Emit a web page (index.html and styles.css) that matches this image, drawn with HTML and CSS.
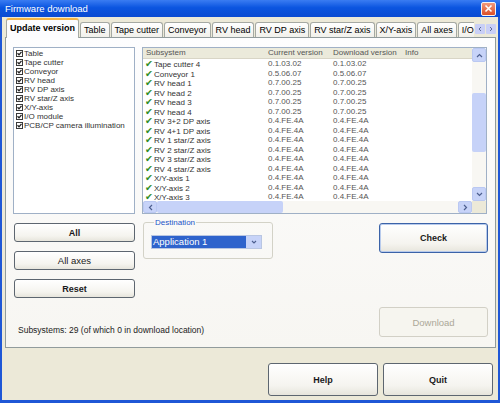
FILE: index.html
```html
<!DOCTYPE html>
<html lang="en">
<head>
    <meta charset="UTF-8">
    <title>Firmware download</title>
    <link rel="stylesheet" href="styles.css">
</head>
<body>
    <div class="window">
        <div class="titlebar">
            <span class="title">Firmware download</span>
            <span class="close">
                <svg width="9" height="9" viewBox="0 0 9 9"><path d="M1.5 1.5 L7.5 7.5 M7.5 1.5 L1.5 7.5" stroke="#fff" stroke-width="1.6"/></svg>
            </span>
        </div>

        <div class="frame">
            <div class="tabstrip">
                <div class="tab-list">
                    <div class="tab active">Update version</div>
                    <div class="tab">Table</div>
                    <div class="tab">Tape cutter</div>
                    <div class="tab">Conveyor</div>
                    <div class="tab">RV head</div>
                    <div class="tab">RV DP axis</div>
                    <div class="tab">RV star/Z axis</div>
                    <div class="tab">X/Y-axis</div>
                    <div class="tab">All axes</div>
                    <div class="tab">I/O module</div>
                </div>
                <div class="tab-arrows">
                    <span><svg width="6" height="6" viewBox="0 0 6 6"><path d="M4 1 L2 3 L4 5" stroke="#5a6a9a" fill="none"/></svg></span>
                    <span><svg width="6" height="6" viewBox="0 0 6 6"><path d="M2 1 L4 3 L2 5" stroke="#5a6a9a" fill="none"/></svg></span>
                </div>
            </div>

            <div class="tab-page">
                <div class="top-row">
                    <ul class="check-list">
                        <li><svg class="cb" viewBox="0 0 7 7"><rect x=".5" y=".5" width="6" height="6"/><path d="M1.5 3.3 L3 4.8 L5.5 1.8"/></svg>Table</li>
                        <li><svg class="cb" viewBox="0 0 7 7"><rect x=".5" y=".5" width="6" height="6"/><path d="M1.5 3.3 L3 4.8 L5.5 1.8"/></svg>Tape cutter</li>
                        <li><svg class="cb" viewBox="0 0 7 7"><rect x=".5" y=".5" width="6" height="6"/><path d="M1.5 3.3 L3 4.8 L5.5 1.8"/></svg>Conveyor</li>
                        <li><svg class="cb" viewBox="0 0 7 7"><rect x=".5" y=".5" width="6" height="6"/><path d="M1.5 3.3 L3 4.8 L5.5 1.8"/></svg>RV head</li>
                        <li><svg class="cb" viewBox="0 0 7 7"><rect x=".5" y=".5" width="6" height="6"/><path d="M1.5 3.3 L3 4.8 L5.5 1.8"/></svg>RV DP axis</li>
                        <li><svg class="cb" viewBox="0 0 7 7"><rect x=".5" y=".5" width="6" height="6"/><path d="M1.5 3.3 L3 4.8 L5.5 1.8"/></svg>RV star/Z axis</li>
                        <li><svg class="cb" viewBox="0 0 7 7"><rect x=".5" y=".5" width="6" height="6"/><path d="M1.5 3.3 L3 4.8 L5.5 1.8"/></svg>X/Y-axis</li>
                        <li><svg class="cb" viewBox="0 0 7 7"><rect x=".5" y=".5" width="6" height="6"/><path d="M1.5 3.3 L3 4.8 L5.5 1.8"/></svg>I/O module</li>
                        <li><svg class="cb" viewBox="0 0 7 7"><rect x=".5" y=".5" width="6" height="6"/><path d="M1.5 3.3 L3 4.8 L5.5 1.8"/></svg>PCB/CP camera illumination</li>
                    </ul>

                    <div class="listview">
                        <div class="lv-main">
                            <div class="lv-content">
                                <div class="lv-head">
                                    <span class="c1">Subsystem</span>
                                    <span class="c2">Current version</span>
                                    <span class="c3">Download version</span>
                                    <span class="c4">Info</span>
                                </div>
                                <div class="lv-row"><span class="c1"><i class="ok">✔</i>Tape cutter 4</span><span class="c2">0.1.03.02</span><span class="c3">0.1.03.02</span></div>
                                <div class="lv-row"><span class="c1"><i class="ok">✔</i>Conveyor 1</span><span class="c2">0.5.06.07</span><span class="c3">0.5.06.07</span></div>
                                <div class="lv-row"><span class="c1"><i class="ok">✔</i>RV head 1</span><span class="c2">0.7.00.25</span><span class="c3">0.7.00.25</span></div>
                                <div class="lv-row"><span class="c1"><i class="ok">✔</i>RV head 2</span><span class="c2">0.7.00.25</span><span class="c3">0.7.00.25</span></div>
                                <div class="lv-row"><span class="c1"><i class="ok">✔</i>RV head 3</span><span class="c2">0.7.00.25</span><span class="c3">0.7.00.25</span></div>
                                <div class="lv-row"><span class="c1"><i class="ok">✔</i>RV head 4</span><span class="c2">0.7.00.25</span><span class="c3">0.7.00.25</span></div>
                                <div class="lv-row"><span class="c1"><i class="ok">✔</i>RV 3+2 DP axis</span><span class="c2">0.4.FE.4A</span><span class="c3">0.4.FE.4A</span></div>
                                <div class="lv-row"><span class="c1"><i class="ok">✔</i>RV 4+1 DP axis</span><span class="c2">0.4.FE.4A</span><span class="c3">0.4.FE.4A</span></div>
                                <div class="lv-row"><span class="c1"><i class="ok">✔</i>RV 1 star/Z axis</span><span class="c2">0.4.FE.4A</span><span class="c3">0.4.FE.4A</span></div>
                                <div class="lv-row"><span class="c1"><i class="ok">✔</i>RV 2 star/Z axis</span><span class="c2">0.4.FE.4A</span><span class="c3">0.4.FE.4A</span></div>
                                <div class="lv-row"><span class="c1"><i class="ok">✔</i>RV 3 star/Z axis</span><span class="c2">0.4.FE.4A</span><span class="c3">0.4.FE.4A</span></div>
                                <div class="lv-row"><span class="c1"><i class="ok">✔</i>RV 4 star/Z axis</span><span class="c2">0.4.FE.4A</span><span class="c3">0.4.FE.4A</span></div>
                                <div class="lv-row"><span class="c1"><i class="ok">✔</i>X/Y-axis 1</span><span class="c2">0.4.FE.4A</span><span class="c3">0.4.FE.4A</span></div>
                                <div class="lv-row"><span class="c1"><i class="ok">✔</i>X/Y-axis 2</span><span class="c2">0.4.FE.4A</span><span class="c3">0.4.FE.4A</span></div>
                                <div class="lv-row"><span class="c1"><i class="ok">✔</i>X/Y-axis 3</span><span class="c2">0.4.FE.4A</span><span class="c3">0.4.FE.4A</span></div>
                            </div>
                            <div class="vscroll">
                                <span class="sb-btn"><svg width="7" height="5" viewBox="0 0 7 5"><path d="M1 4 L3.5 1.5 L6 4" stroke="#4d5f8f" stroke-width="1.2" fill="none"/></svg></span>
                                <div class="track"><div class="thumb"></div></div>
                                <span class="sb-btn"><svg width="7" height="5" viewBox="0 0 7 5"><path d="M1 1 L3.5 3.5 L6 1" stroke="#4d5f8f" stroke-width="1.2" fill="none"/></svg></span>
                            </div>
                        </div>
                        <div class="lv-bottom">
                            <div class="hscroll">
                                <span class="sb-btn"><svg width="5" height="7" viewBox="0 0 5 7"><path d="M4 1 L1.5 3.5 L4 6" stroke="#4d5f8f" stroke-width="1.2" fill="none"/></svg></span>
                                <div class="thumb"></div>
                                <div class="track"></div>
                                <span class="sb-btn"><svg width="5" height="7" viewBox="0 0 5 7"><path d="M1 1 L3.5 3.5 L1 6" stroke="#4d5f8f" stroke-width="1.2" fill="none"/></svg></span>
                            </div>
                            <div class="corner"></div>
                        </div>
                    </div>
                </div>

                <div class="controls">
                    <div class="side-buttons">
                        <button class="btn">All</button>
                        <button class="btn light">All axes</button>
                        <button class="btn">Reset</button>
                    </div>

                    <fieldset class="destination">
                        <legend>Destination</legend>
                        <div class="combo">
                            <span class="combo-value">Application 1</span>
                            <span class="combo-arrow"><svg width="6" height="4" viewBox="0 0 6 4"><path d="M1 1 L3 3 L5 1" stroke="#4d5f8f" stroke-width="1.1" fill="none"/></svg></span>
                        </div>
                    </fieldset>

                    <button class="btn default check">Check</button>

                    <div class="status">Subsystems: 29 (of which 0 in download location)</div>
                    <button class="btn download" disabled>Download</button>
                </div>
            </div>

            <div class="footer">
                <button class="btn big">Help</button>
                <button class="btn big">Quit</button>
            </div>
        </div>
    </div>
</body>
</html>
```

FILE: styles.css
```css
/* General */
body {
    margin: 0;
    font-family: "Liberation Sans", Arial, sans-serif;
    background: #fff;
}

.window {
    width: 500px;
    height: 403px;
    display: flex;
    flex-direction: column;
}

/* Title bar */
.titlebar {
    height: 17px;
    flex: none;
    display: flex;
    align-items: center;
    justify-content: space-between;
    padding: 0 4px 0 5px;
    background: linear-gradient(#3a7cf2, #0b55e0 45%, #0a4ad2);
}

.title {
    color: #fff;
    font-size: 9.5px;
}

.close {
    width: 15px;
    height: 14px;
    box-sizing: border-box;
    border: 1px solid #f4f4f4;
    border-radius: 2px;
    background: linear-gradient(#f19a7c, #dc4e26);
    display: flex;
    align-items: center;
    justify-content: center;
}

.frame {
    flex: 1;
    display: flex;
    flex-direction: column;
    border: solid #1f57d6;
    border-width: 0 2px 3px;
    background: #ece9d8;
}

/* Tabs */
.tabstrip {
    height: 21px;
    flex: none;
    display: flex;
    padding-left: 4px;
}

.tab-list {
    flex: 1;
    min-width: 0;
    display: flex;
    align-items: flex-end;
    overflow: hidden;
}

.tab {
    flex: none;
    height: 16px;
    box-sizing: border-box;
    padding: 0 3px;
    margin-left: 1px;
    border: 1px solid #a5a9a3;
    border-bottom: none;
    border-radius: 3px 3px 0 0;
    background: linear-gradient(#ffffff, #f0efe9);
    font-size: 9px;
    line-height: 14px;
    color: #000;
}

.tab.active {
    height: 20px;
    position: relative;
    z-index: 1;
    margin-left: 0;
    border-top: 2px solid #f3b445;
    background: #fcfcfe;
    font-weight: bold;
    line-height: 17px;
    padding: 0 3px;
}

.tab-arrows {
    width: 21px;
    flex: none;
    display: flex;
    gap: 1px;
    align-items: center;
    margin: 0 2px 0 1px;
    padding-top: 3px;
}

.tab-arrows span {
    width: 10px;
    height: 10px;
    background: #c9cff6;
    border-radius: 1px;
    display: flex;
    align-items: center;
    justify-content: center;
}

.tab-page {
    height: 311px;
    flex: none;
    box-sizing: border-box;
    margin: -1px 2px 0 3px;
    border: 1px solid #919b9c;
    background: linear-gradient(#fdfdfe, #f7f6f2);
    padding: 9px 7px 0 7px;
}

.top-row {
    display: flex;
    gap: 7px;
    height: 167px;
}

/* Checked list */
.check-list {
    width: 122px;
    box-sizing: border-box;
    margin: 0;
    padding: 1px 0 0 2px;
    list-style: none;
    border: 1px solid #9fb0c6;
    background: #fff;
}

.check-list li {
    height: 9px;
    display: flex;
    align-items: center;
    gap: 1px;
    font-size: 8px;
    line-height: 9px;
    color: #333;
    white-space: nowrap;
}

.cb {
    width: 7px;
    height: 7px;
    flex: none;
}

.cb rect {
    fill: #fff;
    stroke: #3a3a3a;
}

.cb path {
    fill: none;
    stroke: #222;
    stroke-width: 1.3;
}

/* List view */
.listview {
    width: 345px;
    box-sizing: border-box;
    border: 1px solid #9fb0c6;
    background: #fff;
    display: flex;
    flex-direction: column;
}

.lv-main {
    flex: 1;
    min-height: 0;
    display: flex;
}

.lv-content {
    flex: 1;
    overflow: hidden;
}

.lv-head {
    height: 10px;
    display: flex;
    background: #ebeadb;
    border-bottom: 1px solid #d8d5c6;
    font-size: 8px;
    line-height: 10px;
    color: #555;
}

.lv-row {
    height: 9.5px;
    display: flex;
    font-size: 8px;
    line-height: 9.5px;
    color: #555;
    white-space: nowrap;
}

.c1 { width: 123px; padding-left: 3px; box-sizing: border-box; }
.c2 { width: 65px; padding-left: 2px; box-sizing: border-box; }
.c3 { width: 70px; padding-left: 2px; box-sizing: border-box; }
.c4 { flex: 1; padding-left: 4px; }

.lv-row .c1 {
    padding-left: 2px;
    color: #333;
}

.ok {
    font-style: normal;
    font-family: "DejaVu Sans", sans-serif;
    font-size: 9.5px;
    line-height: 9.5px;
    color: #2e8b25;
    margin-right: 1px;
}

/* Scroll bars */
.vscroll {
    width: 14px;
    display: flex;
    flex-direction: column;
    background: #f8f7f3;
}

.sb-btn {
    width: 14px;
    height: 14px;
    flex: none;
    box-sizing: border-box;
    border: 1px solid #bac8f2;
    border-radius: 2px;
    background: #c7d3f8;
    display: flex;
    align-items: center;
    justify-content: center;
}

.vscroll .track {
    flex: 1;
    padding-top: 31px;
}

.vscroll .thumb {
    height: 59px;
    background: #c6d2f8;
    border-radius: 2px;
}

.lv-bottom {
    height: 12px;
    display: flex;
}

.hscroll {
    flex: 1;
    display: flex;
    background: #f8f7f3;
}

.hscroll .sb-btn {
    height: 12px;
}

.hscroll .thumb {
    width: 126px;
    background: #c6d2f8;
    border-radius: 2px;
}

.hscroll .track {
    flex: 1;
}

.corner {
    width: 14px;
    background: #ece9d8;
}

/* Lower controls */
.controls {
    display: grid;
    grid-template-columns: 121px 130px 1fr 109px;
    grid-template-rows: 75px 30px;
    column-gap: 8px;
    row-gap: 9px;
    margin-top: 9px;
    padding-left: 1px;
}

.side-buttons {
    display: flex;
    flex-direction: column;
    gap: 9px;
}

.btn {
    font-family: "Liberation Sans", Arial, sans-serif;
    font-size: 9px;
    font-weight: bold;
    color: #1a1a1a;
    padding: 0;
    border: 1px solid #5d6670;
    border-radius: 3px;
    background: linear-gradient(#ffffff, #f5f4ef 70%, #e7e5dc);
    cursor: pointer;
}

.side-buttons .btn {
    height: 19px;
}

.btn.light {
    font-weight: normal;
    font-size: 9.5px;
}

.btn.default {
    border-color: #3b63a8;
    box-shadow: inset 0 0 0 1px #b8cbec;
}

.check {
    grid-column: 4;
    grid-row: 1;
    height: 30px;
    align-self: start;
}

.destination {
    grid-column: 2;
    grid-row: 1;
    align-self: start;
    margin: -5px 0 0;
    padding: 8px 0 9px 7px;
    min-inline-size: 0;
    border: 1px solid #d3d2c7;
    border-radius: 3px;
}

.destination legend {
    font-size: 8px;
    line-height: 9px;
    color: #2455c8;
    padding: 0 1px;
    margin-left: 3px;
}

.combo {
    width: 111px;
    height: 14px;
    box-sizing: border-box;
    border: 1px solid #b9c6e2;
    background: #fff;
    display: flex;
}

.combo-value {
    flex: 1;
    background: #2f63cc;
    color: #fff;
    font-size: 9.5px;
    line-height: 12px;
    padding-left: 1px;
}

.combo-arrow {
    width: 15px;
    background: #c7d3f8;
    display: flex;
    align-items: center;
    justify-content: center;
}

.status {
    grid-column: 1 / 4;
    grid-row: 2;
    align-self: end;
    padding: 0 0 2px 4px;
    font-size: 8.5px;
    line-height: 10px;
    color: #222;
}

.download {
    grid-column: 4;
    grid-row: 2;
    height: 30px;
}

.btn:disabled {
    color: #aca899;
    font-weight: normal;
    font-size: 9.5px;
    border-color: #d2d0c6;
    background: #f6f5ef;
    cursor: default;
}

/* Footer */
.footer {
    flex: 1;
    display: flex;
    justify-content: flex-end;
    align-items: flex-start;
    gap: 5px;
    padding: 15px 5px 0 0;
}

.btn.big {
    width: 110px;
    height: 33px;
}
```
